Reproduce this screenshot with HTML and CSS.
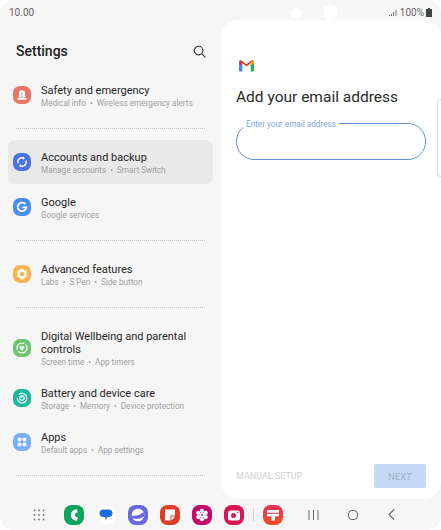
FILE: index.html
```html
<!DOCTYPE html>
<html lang="en">
<head>
    <meta charset="UTF-8">
    <meta name="viewport" content="width=device-width, initial-scale=1.0">
    <title>Settings</title>
    <link rel="stylesheet" href="styles.css">
</head>
<body>
    <div class="screen">
        <!-- Status bar -->
        <div class="status">
            <span>10.00</span>
            <div class="status-right">
                <svg width="10" height="8" viewBox="0 0 10 8"><path d="M1 6h1v1H1zM3 5h1v2H3zM5 3h1v4H5zM7.5 1h1v6h-1z" fill="#777"/></svg>
                <span>100%</span>
                <svg width="6" height="9" viewBox="0 0 6 9"><path d="M2 0h2v1h2v8H0V1h2z" fill="#444"/></svg>
            </div>
        </div>
        <div class="camera camera-small"></div>
        <div class="camera camera-big"></div>

        <div class="main">
            <!-- Settings list -->
            <div class="side">
                <div class="side-head">
                    <h1>Settings</h1>
                    <svg width="13" height="13" viewBox="0 0 14 14" fill="none" stroke="#333" stroke-width="1.2"><circle cx="6" cy="6" r="4.6"/><path d="M9.4 9.4L13 13" stroke-linecap="round"/></svg>
                </div>

                <div class="item">
                    <svg class="item-icon" viewBox="0 0 18 18"><rect width="18" height="18" rx="7" fill="#ea7566"/><path d="M6.3 5.8Q6.5 4.5 8 4.500h2q1.500 0 1.700 1.300l.7 5.700H5.600z" fill="#fff"/><rect x="4.500" y="12" width="9" height="1.800" rx=".6" fill="#fff"/><path d="M8.500 6.500h1v2.500h-1zM8.500 9.700h1v1h-1z" fill="#ea7566"/></svg>
                    <div class="item-text">
                        <div class="item-title">Safety and emergency</div>
                        <div class="item-sub">Medical info<span class="dot">•</span>Wireless emergency alerts</div>
                    </div>
                </div>
                <div class="sep"></div>

                <div class="item active">
                    <svg class="item-icon" viewBox="0 0 18 18"><rect width="18" height="18" rx="7" fill="#4b74e3"/><g fill="none" stroke="#fff" stroke-width="1.300"><path d="M5.200 10.500A4 4 0 0 1 10.500 5.200"/><path d="M12.800 7.500A4 4 0 0 1 7.500 12.800"/></g><path d="M10 3.500l2 2-2.200 1.200zM8 14.500l-2-2 2.200-1.200z" fill="#fff"/></svg>
                    <div class="item-text">
                        <div class="item-title">Accounts and backup</div>
                        <div class="item-sub">Manage accounts<span class="dot">•</span>Smart Switch</div>
                    </div>
                </div>
                <div class="item item-google">
                    <svg class="item-icon" viewBox="0 0 18 18"><rect width="18" height="18" rx="7" fill="#4b8df0"/><path d="M12.500 6.300A4.300 4.300 0 1 0 13.300 9.300H9.300" fill="none" stroke="#fff" stroke-width="1.800"/></svg>
                    <div class="item-text">
                        <div class="item-title">Google</div>
                        <div class="item-sub">Google services</div>
                    </div>
                </div>
                <div class="sep"></div>

                <div class="item">
                    <svg class="item-icon" viewBox="0 0 18 18"><rect width="18" height="18" rx="7" fill="#fbb44f"/><circle cx="9" cy="9" r="3.400" fill="none" stroke="#fff" stroke-width="2.200"/><g fill="#fff"><circle cx="9" cy="4.800" r="1.300"/><circle cx="9" cy="13.200" r="1.300"/><circle cx="5.400" cy="6.900" r="1.300"/><circle cx="12.600" cy="6.900" r="1.300"/><circle cx="5.400" cy="11.100" r="1.300"/><circle cx="12.600" cy="11.100" r="1.300"/></g></svg>
                    <div class="item-text">
                        <div class="item-title">Advanced features</div>
                        <div class="item-sub">Labs<span class="dot">•</span>S Pen<span class="dot">•</span>Side button</div>
                    </div>
                </div>
                <div class="sep"></div>

                <div class="item item-tall">
                    <svg class="item-icon" viewBox="0 0 18 18"><rect width="18" height="18" rx="7" fill="#6fc474"/><circle cx="9" cy="9" r="5" fill="none" stroke="#fff" stroke-width="1.200" stroke-dasharray="12 1.500"/><path d="M9 11.500L6.800 9.200a1.300 1.300 0 0 1 2.200-1.500 1.300 1.300 0 0 1 2.200 1.500z" fill="#fff"/></svg>
                    <div class="item-text">
                        <div class="item-title">Digital Wellbeing and parental controls</div>
                        <div class="item-sub">Screen time<span class="dot">•</span>App timers</div>
                    </div>
                </div>
                <div class="item">
                    <svg class="item-icon" viewBox="0 0 18 18"><rect width="18" height="18" rx="7" fill="#1bb79f"/><path d="M6 5.500A4.800 4.800 0 1 1 4.300 9" fill="none" stroke="#fff" stroke-width="1.100"/><circle cx="9" cy="9" r="2.300" fill="none" stroke="#fff" stroke-width="1.100"/><path d="M8.500 7h1v2h-1z" fill="#fff"/></svg>
                    <div class="item-text">
                        <div class="item-title">Battery and device care</div>
                        <div class="item-sub">Storage<span class="dot">•</span>Memory<span class="dot">•</span>Device protection</div>
                    </div>
                </div>
                <div class="item">
                    <svg class="item-icon" viewBox="0 0 18 18"><rect width="18" height="18" rx="7" fill="#7ab0f8"/><g fill="#fff"><circle cx="6.500" cy="6.500" r="2"/><circle cx="11.500" cy="6.500" r="2"/><circle cx="6.500" cy="11.500" r="2"/><circle cx="11.500" cy="11.500" r="2"/></g></svg>
                    <div class="item-text">
                        <div class="item-title">Apps</div>
                        <div class="item-sub">Default apps<span class="dot">•</span>App settings</div>
                    </div>
                </div>
                <div class="sep"></div>
            </div>

            <!-- Gmail setup -->
            <div class="panel">
                <svg class="gmail" width="15" height="12" viewBox="0 0 15 12">
                    <path d="M0 3v7.500Q0 11.500 1 11.500h2.300V5z" fill="#4285f4"/>
                    <path d="M11.700 5v6.500H14q1 0 1-1V3z" fill="#34a853"/>
                    <path d="M0 1.800Q.5-.3 2.500.5L7.500 4.300 12.500.5Q14.500-.3 15 1.800V3l-3.300 2.500V3L7.500 6.500 3.300 3v2.500L0 3z" fill="#d93a30"/>
                    <path d="M11.700 1.400L15 1.800V3l-3.300 2.500z" fill="#f5b50f"/>
                </svg>
                <h2>Add your email address</h2>
                <div class="field">
                    <label class="field-label" for="email">Enter your email address</label>
                    <input class="field-input" id="email" type="text">
                </div>
                <div class="panel-foot">
                    <span class="manual">MANUAL SETUP</span>
                    <button class="next">NEXT</button>
                </div>
                <div class="edge-tab"></div>
            </div>
        </div>

        <!-- Dock -->
        <div class="dock">
            <svg class="dock-grid" width="12" height="12" viewBox="0 0 12 12" fill="#777"><circle cx="1.500" cy="1.500" r=".9"/><circle cx="6" cy="1.500" r=".9"/><circle cx="10.500" cy="1.500" r=".9"/><circle cx="1.500" cy="6" r=".9"/><circle cx="6" cy="6" r=".9"/><circle cx="10.500" cy="6" r=".9"/><circle cx="1.500" cy="10.500" r=".9"/><circle cx="6" cy="10.500" r=".9"/><circle cx="10.500" cy="10.500" r=".9"/></svg>
            <div class="dock-apps">
                <svg class="app" viewBox="0 0 20 20"><rect width="20" height="20" rx="7.500" fill="#0ca35c"/><path d="M13 4.200Q7.500 4.500 6.800 9.800 6.800 15.500 13 15.800l.8-3.500-2.300-.6q-1.200-1.800 0-3.600l2.300-.6z" fill="#fff"/></svg>
                <svg class="app" viewBox="0 0 20 20"><circle cx="10" cy="10" r="10" fill="#fff"/><path d="M7.500 4.500h5q4 0 4 3.800t-4 3.700h-1.300L9.800 15.500 9 12H7.500q-4 0-4-3.700t4-3.800z" fill="#1a6fe0"/></svg>
                <svg class="app" viewBox="0 0 20 20"><rect width="20" height="20" rx="7.500" fill="#6a68e0"/><circle cx="10" cy="10" r="6.300" fill="#fff"/><path d="M3.700 10.500Q9 12 15.500 7 16.800 9 16 11.500 10 15.500 4.500 13z" fill="#6a68e0"/></svg>
                <svg class="app" viewBox="0 0 20 20"><rect width="20" height="20" rx="7.500" fill="#e03c2a"/><path d="M5 5.500Q5 4.500 6 4.500h8q1 0 1 1v5h-4.500v5H6q-1 0-1-1z" fill="#fff"/><path d="M11.500 11.500H15L11.500 15.500z" fill="#fff"/></svg>
                <svg class="app" viewBox="0 0 20 20"><rect width="20" height="20" rx="7.500" fill="#c8076c"/><g fill="#fff"><circle cx="10" cy="5.800" r="2.100"/><circle cx="10" cy="14.200" r="2.100"/><circle cx="6.300" cy="7.900" r="2.100"/><circle cx="13.700" cy="7.900" r="2.100"/><circle cx="6.300" cy="12.100" r="2.100"/><circle cx="13.700" cy="12.100" r="2.100"/><circle cx="10" cy="10" r="2.500"/></g><circle cx="10" cy="10" r=".9" fill="#c8076c"/></svg>
                <svg class="app" viewBox="0 0 20 20"><rect width="20" height="20" rx="7.500" fill="#dc1454"/><rect x="4" y="5.500" width="12" height="10" rx="2.500" fill="#fff"/><circle cx="9.500" cy="10.500" r="2.500" fill="#dc1454"/><circle cx="13.800" cy="7.500" r=".8" fill="#dc1454"/></svg>
                <div class="dock-div"></div>
                <svg class="app" viewBox="0 0 20 20"><defs><linearGradient id="store" x1="0" y1="0" x2="0" y2="1"><stop offset="0" stop-color="#ec2f5a"/><stop offset="1" stop-color="#f4511e"/></linearGradient></defs><rect width="20" height="20" rx="7.500" fill="url(#store)"/><path d="M4 5h12v5.500q0 1-1 1h-3v4H8.500v-4H5q-1 0-1-1z" fill="#fff"/><path d="M4 7.800h12v1H4z" fill="#ec2f5a"/></svg>
            </div>
            <div class="nav">
                <svg width="11" height="10" viewBox="0 0 11 10" fill="#666"><path d="M.5 0h1v10h-1zM5 0h1v10H5zM9.500 0h1v10h-1z"/></svg>
                <svg width="10" height="10" viewBox="0 0 10 10" fill="none" stroke="#666"><rect x=".5" y=".5" width="9" height="9" rx="3.500"/></svg>
                <svg width="7" height="11" viewBox="0 0 7 11" fill="none" stroke="#666" stroke-width="1.100"><path d="M6 .5L1 5.500l5 5"/></svg>
            </div>
        </div>
    </div>
</body>
</html>
```

FILE: styles.css
```css
* {
    box-sizing: border-box;
}
html, body {
    margin: 0;
    height: 100%;
}
body {
    font-family: Roboto, "Liberation Sans", sans-serif;
    background-color: #fff;
    color: #222;
    overflow: hidden;
}
.screen {
    position: relative;
    display: flex;
    flex-direction: column;
    width: 441px;
    height: 530px;
    background-color: #f6f6f6;
    border-radius: 14px;
    overflow: hidden;
}

/* status bar */
.status {
    display: flex;
    justify-content: space-between;
    align-items: center;
    height: 20px;
    padding: 5px 9px 0 9px;
    font-size: 10px;
    color: #666;
}
.status-right {
    display: flex;
    align-items: center;
    gap: 2px;
}
.camera {
    position: absolute;
    border-radius: 50%;
    background-color: #fff;
}
.camera-small {
    left: 291px;
    top: 8px;
    width: 11px;
    height: 11px;
}
.camera-big {
    left: 323px;
    top: 5px;
    width: 15px;
    height: 15px;
}

.main {
    display: flex;
    height: 479px;
}

/* settings list */
.side {
    width: 221px;
    flex-shrink: 0;
}
.side-head {
    display: flex;
    justify-content: space-between;
    align-items: center;
    height: 53px;
    padding: 9px 15px 0 16px;
}
.side-head h1 {
    margin: 0;
    font-size: 14px;
    font-weight: 500;
    color: #222;
}
.item {
    display: flex;
    align-items: center;
    min-height: 44px;
    margin: 0 8px;
    padding: 0 5px;
    border-radius: 7px;
}
.item.active {
    background-color: #e9e9e9;
}
.item-google {
    margin-top: 1px;
}
.item-tall {
    min-height: 57px;
}
.item-icon {
    width: 18px;
    height: 18px;
    flex-shrink: 0;
    margin-right: 10px;
}
.item-text {
    padding-top: 3px;
}
.item-title {
    font-size: 11px;
    line-height: 13px;
    color: #252525;
}
.item-sub {
    font-size: 8.2px;
    line-height: 13px;
    color: #a0a0a0;
}
.dot {
    margin: 0 4px;
}
.sep {
    height: 1px;
    margin: 11px 16px;
    border-top: 1px dotted #c4c4c4;
}

/* gmail panel */
.panel {
    position: relative;
    display: flex;
    flex-direction: column;
    flex: 1;
    padding: 40px 15px 11px;
    background-color: #fff;
    border-radius: 18px;
}
.gmail {
    margin-left: 3px;
}
.panel h2 {
    margin: 15px 0 0;
    font-size: 15.5px;
    line-height: 20px;
    font-weight: 400;
    color: #2a2a2a;
}
.field {
    position: relative;
    margin-top: 16px;
}
.field-label {
    position: absolute;
    left: 7px;
    top: -4px;
    padding: 0 3px;
    font-size: 8.2px;
    line-height: 10px;
    color: #7ba6e6;
    background-color: #fff;
}
.field-input {
    display: block;
    width: 190px;
    height: 37px;
    border: 1.500px solid #5f90d8;
    border-radius: 18px;
    background: none;
    outline: none;
}
.panel-foot {
    display: flex;
    justify-content: space-between;
    align-items: center;
    margin-top: auto;
    width: 190px;
}
.manual {
    font-size: 9px;
    color: #d0d0d0;
}
.next {
    width: 52px;
    height: 24px;
    padding: 0;
    border: none;
    border-radius: 2px;
    background-color: #c3d9f5;
    color: #a2b2c9;
    font-family: inherit;
    font-size: 9.500px;
}
.edge-tab {
    position: absolute;
    right: 0;
    top: 79px;
    width: 4px;
    height: 78px;
    border: 1px solid #ddd;
    border-right: none;
    border-radius: 4px 0 0 4px;
}

/* dock */
.dock {
    display: flex;
    align-items: center;
    height: 31px;
}
.dock-grid {
    margin-left: 33px;
}
.dock-apps {
    display: flex;
    align-items: center;
    gap: 12px;
    margin-left: 19px;
}
.app {
    width: 20px;
    height: 20px;
}
.dock-div {
    width: 1px;
    height: 13px;
    margin: 0 -3px 0 -3px;
    background-color: #cfcfcf;
}
.nav {
    display: flex;
    align-items: center;
    gap: 29px;
    margin-left: 25px;
}
.nav svg:last-child {
    margin-left: 1px;
}
```
